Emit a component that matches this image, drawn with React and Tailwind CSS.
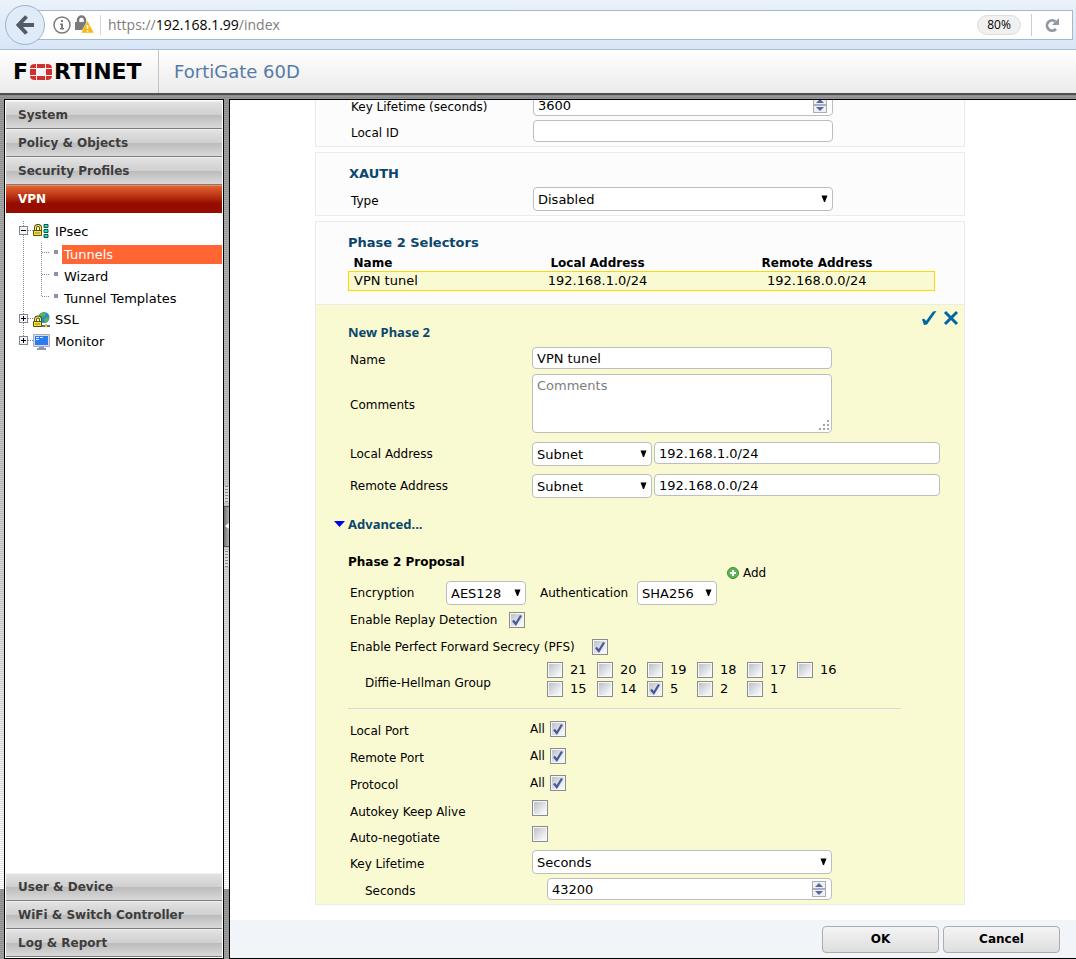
import { useId, useState } from 'react';
import clsx from 'clsx';

const TOP_MENU = ['System', 'Policy & Objects', 'Security Profiles'];
const BOTTOM_MENU = ['User & Device', 'WiFi & Switch Controller', 'Log & Report'];
const DH_GROUPS = [
  ['21', '20', '19', '18', '17', '16'],
  ['15', '14', '5', '2', '1'],
];

function BrowserBar() {
  return (
    <div className="flex h-[50px] shrink-0 items-center border-b border-[#a9bdd3] bg-linear-to-b from-[#eaf2fb] to-[#d7e6f7] pr-[3px] pl-[5px] font-['Open_Sans',sans-serif]">
      <button
        type="button"
        aria-label="Back"
        className="z-10 flex h-10 w-10 shrink-0 items-center justify-center rounded-full border border-[#9fb3cb] bg-[#dfebf8]"
      >
        <svg width="20" height="20" viewBox="0 0 20 20" fill="none" stroke="#545b65" strokeWidth="4">
          <path d="M11.5 1.5 3.5 10l8 8.500M4 10h15" />
        </svg>
      </button>
      <div className="-ml-2 flex h-[30px] min-w-0 flex-1 items-center border border-[#a3b7cd] bg-white pr-3 pl-[15px]">
        <svg className="shrink-0" width="18" height="18" viewBox="0 0 18 18">
          <circle cx="9" cy="9" r="8" fill="#fff" stroke="#7b7b7b" strokeWidth="1.500" />
          <path d="M8 4h2v2H8zM7 7.500h3V12h1v1.500H7V12h1V9H7z" fill="#7b7b7b" />
        </svg>
        <svg className="ml-1 shrink-0" width="19" height="19" viewBox="0 0 19 19">
          <path d="M3 8V5a3.500 3.500 0 0 1 7 0v3" fill="none" stroke="#7b7b7b" strokeWidth="2.500" />
          <path d="M0 7h12v8H0z" fill="#7b7b7b" />
          <path d="M12.500 5.500 19 18H6z" fill="#fcb80f" stroke="#fff" strokeWidth=".5" strokeLinejoin="round" />
          <path d="M11.700 10h1.600v4h-1.600zM11.700 15.300h1.600v1.500h-1.600z" fill="#fff" />
        </svg>
        <div className="ml-[6px] h-5 w-px shrink-0 bg-[#d4d4d4]" />
        <div className="ml-[7px] flex-1 truncate text-[14px] leading-[22px] text-[#7d7d7d]">
          https://<span className="text-black">192.168.1.99</span>/index
        </div>
        <button
          type="button"
          className="h-5 w-11 rounded-full border border-[#dedede] bg-[#f0f0f0] text-[12px] leading-4 text-black"
        >
          80%
        </button>
        <div className="ml-[10px] h-[22px] w-px shrink-0 bg-[#c9ced4]" />
        <button type="button" aria-label="Reload" className="ml-3">
          <svg width="16" height="16" viewBox="0 0 16 16">
            <path d="M12 12A5.200 5.200 0 1 1 11.500 4.500" fill="none" stroke="#8f99a3" strokeWidth="2.800" />
            <path d="M15 1v7H8z" fill="#8f99a3" />
          </svg>
        </button>
      </div>
    </div>
  );
}

function Logo() {
  return (
    <div className="flex items-center text-[22px] leading-6 font-bold text-black" aria-label="Fortinet">
      <span>F</span>
      <svg className="mx-[2px]" width="22" height="16" viewBox="0 0 22 16" fill="#d0302f">
        <path d="M6 0v4H0Q0 0 5 0zM7 0h8v4H7zM16 0h1q5 0 5 4h-6zM0 5h6v6H0zM16 5h6v6h-6zM0 12h6v4H5q-5 0-5-4zM7 12h8v4H7zM16 12h6q0 4-5 4h-1z" />
      </svg>
      <span>RTINET</span>
    </div>
  );
}

function MenuButton({ label, active = false }) {
  return (
    <button
      type="button"
      className={clsx(
        'block h-7 w-full border-t border-b pl-3 text-left text-[12px] leading-[26px] font-bold',
        active
          ? 'border-t-[#f58a60] border-b-[#960d00] bg-linear-to-b from-[#e2622f] via-[#b32c10] via-45% to-[#960d00] to-65% text-white'
          : 'border-t-[#f0f0f0] border-b-[#7b7b7b] bg-[linear-gradient(#e2e2e2,#d0d0d0_48%,#bcbcbc_52%,#d9d9d9)] text-[#3d3d3d]'
      )}
    >
      {label}
    </button>
  );
}

// Dotted connector with the +/- box for a top level tree node.
function NodeLines({ open = false, first = false, last = false }) {
  return (
    <svg className="shrink-0" width="27" height="22" viewBox="0 0 27 22" shapeRendering="crispEdges">
      <path
        d={`M17.500 ${first ? -2 : 0}V${last ? 10 : 22}M22 9.500h5`}
        stroke="#8a8a8a"
        strokeDasharray="1 1"
        overflow="visible"
      />
      <rect x="13.500" y="5.500" width="8" height="8" fill="#f4f4f4" stroke="#7f8796" />
      <path d={open ? 'M15 9.500h5' : 'M15 9.500h5M17.500 7v5'} stroke="#000" />
    </svg>
  );
}

function LeafLines({ last = false }) {
  return (
    <svg className="shrink-0" width="56" height="22" viewBox="0 0 56 22" shapeRendering="crispEdges">
      <path
        d={last ? 'M17.500 0V22M35.500 0V10M36 9.500h8' : 'M17.500 0V22M35.500 0V22M36 9.500h8'}
        stroke="#8a8a8a"
        strokeDasharray="1 1"
      />
      <rect x="48" y="7" width="4" height="4" fill="#8892ab" />
    </svg>
  );
}

function IpsecIcon() {
  return (
    <svg width="16" height="16" viewBox="0 0 16 16">
      <path d="M2.500 7V4q0-2.500 2.500-2.500T7.500 4v3" fill="none" stroke="#4a4600" strokeWidth="3" />
      <path d="M2.500 7V4q0-2.500 2.500-2.500T7.500 4v3" fill="none" stroke="#f7ee7a" strokeWidth="1.200" />
      <path d="M.5 6.500h8v5h-8z" fill="#f3e43c" stroke="#55500a" />
      <path d="M2 9h5" stroke="#8f8410" />
      <path d="M11 .5h4v3h-4zM11 5.500h4v3h-4zM11 10.500h4v3h-4z" fill="#22e0b4" stroke="#07594a" />
    </svg>
  );
}

function SslIcon() {
  return (
    <svg width="17" height="16" viewBox="0 0 17 16">
      <circle cx="11" cy="5.500" r="5.500" fill="#2f86d8" />
      <path d="M7 2q3-2.500 6-1l-1 3-3 1-1 2-2-2zM12 6l4-1q0 4-3 6l-2-3z" fill="#57b74b" />
      <path d="M8 14h9" stroke="#68707c" strokeWidth="2" />
      <path d="M12 12h2v3h-2z" fill="#f1c232" />
      <path d="M2.500 10V7.500Q2.500 5 5 5t2.500 2.500V10" fill="none" stroke="#4a4600" strokeWidth="3" />
      <path d="M2.500 10V7.500Q2.500 5 5 5t2.500 2.500V10" fill="none" stroke="#f7ee7a" strokeWidth="1.200" />
      <path d="M.5 9.500h8v5h-8z" fill="#f3e43c" stroke="#55500a" />
      <path d="M2 12h5" stroke="#8f8410" />
    </svg>
  );
}

function MonitorIcon() {
  return (
    <svg width="17" height="16" viewBox="0 0 17 16">
      <path d="M.5.5h16v12H.5z" fill="#d9dde6" stroke="#a4abbb" />
      <path d="M2 2h13v9H2z" fill="#2d7bf0" />
      <path d="M3 3.500h3M7 3.500h3M3 5.500h3" stroke="#d4e6ff" />
      <path d="M6 13h5v1h2v2H4v-2h2z" fill="#8f98ab" />
    </svg>
  );
}

function TreeNode({ icon, label, ...lines }) {
  return (
    <a href="#" className="flex h-[22px] items-center">
      <NodeLines {...lines} />
      <span className="flex w-[22px] shrink-0">{icon}</span>
      <span className="leading-5">{label}</span>
    </a>
  );
}

function TreeLeaf({ label, active, last }) {
  return (
    <a href="#" className="flex h-[22px] items-center">
      <LeafLines last={last} />
      <span className={clsx('h-[19px] flex-1 px-[2px] leading-5', active && 'bg-[#ff6633] text-white')}>
        {label}
      </span>
    </a>
  );
}

function Sidebar() {
  return (
    <nav className="flex w-[220px] shrink-0 flex-col border border-black bg-white p-px text-[12px]">
      {TOP_MENU.map((item) => (
        <MenuButton key={item} label={item} />
      ))}
      <MenuButton label="VPN" active />
      <div className="flex-1 pt-2 text-[13px]">
        <TreeNode icon={<IpsecIcon />} label="IPsec" open first />
        <TreeLeaf label="Tunnels" active />
        <TreeLeaf label="Wizard" />
        <TreeLeaf label="Tunnel Templates" last />
        <TreeNode icon={<SslIcon />} label="SSL" />
        <TreeNode icon={<MonitorIcon />} label="Monitor" last />
      </div>
      {BOTTOM_MENU.map((item) => (
        <MenuButton key={item} label={item} />
      ))}
    </nav>
  );
}

function Grip() {
  return (
    <div className="flex h-4 w-[5px] justify-center bg-[#dcdcdc]">
      <div className="w-[3px] bg-[repeating-linear-gradient(#8a8a8a_0_1px,#dcdcdc_1px_3px)]" />
    </div>
  );
}

function Splitter() {
  return (
    <div className="flex w-[5px] shrink-0 flex-col items-center justify-center gap-1 pb-[6px]">
      <Grip />
      <button
        type="button"
        aria-label="Collapse menu"
        className="flex h-[41px] w-[5px] items-center justify-center border-y border-[#555] bg-linear-to-r from-[#6e6e6e] to-[#b4b4b4]"
      >
        <svg width="4" height="6" viewBox="0 0 4 6" fill="#fff">
          <path d="M4 0v6L0 3z" />
        </svg>
      </button>
      <Grip />
    </div>
  );
}

const FIELD = 'block w-full rounded-[4px] border border-[#bdbdbd] bg-white px-1 text-[13px] text-black outline-none';

function TextInput({ className, ...props }) {
  return <input type="text" className={clsx(FIELD, 'h-[22px] leading-5', className)} {...props} />;
}

function Select({ options, className, ...props }) {
  return (
    <div className={clsx('relative', className)}>
      <select className={clsx(FIELD, 'h-6 appearance-none pt-px leading-5')} {...props}>
        {options.map((o) => (
          <option key={o}>{o}</option>
        ))}
      </select>
      <svg className="pointer-events-none absolute top-2 right-[5px]" width="7" height="7" viewBox="0 0 7 7">
        <path d="M.5.5h6L4 7H3z" />
      </svg>
    </div>
  );
}

function NumberInput({ id, initial, className }) {
  const [value, setValue] = useState(initial);
  const arrow = 'flex h-[6px] w-3 items-center justify-center bg-[#eef0f3]';
  return (
    <div className={clsx('relative', className)}>
      <input
        id={id}
        type="number"
        value={value}
        onChange={(e) => setValue(Number(e.target.value))}
        className={clsx(FIELD, 'h-[22px] [appearance:textfield] leading-5 [&::-webkit-inner-spin-button]:appearance-none')}
      />
      <div className="absolute top-[3px] right-[6px] flex h-4 w-[14px] flex-col justify-between border border-[#adadad] bg-[#adadad]">
        <button type="button" aria-label="Increase" onClick={() => setValue(value + 1)} className={arrow}>
          <svg width="8" height="4" viewBox="0 0 8 4" fill="#4f68b0">
            <path d="M4 0l4 4H0z" />
          </svg>
        </button>
        <button type="button" aria-label="Decrease" onClick={() => setValue(value - 1)} className={arrow}>
          <svg width="8" height="4" viewBox="0 0 8 4" fill="#4f68b0">
            <path d="M0 0h8L4 4z" />
          </svg>
        </button>
      </div>
    </div>
  );
}

function Checkbox({ id, checked = false }) {
  return (
    <span className="relative block h-4 w-4 shrink-0">
      <input
        id={id}
        type="checkbox"
        defaultChecked={checked}
        className="peer block h-4 w-4 appearance-none border border-[#8a8c8e] bg-[#f6f6f6] bg-[linear-gradient(135deg,#bcc2c9,#f4f5f6_85%)] bg-[length:12px_12px] bg-center bg-no-repeat"
      />
      <svg
        className="pointer-events-none absolute top-[2px] left-[2px] hidden peer-checked:block"
        width="12"
        height="12"
        viewBox="0 0 12 12"
      >
        <path d="M2 6.500 4.800 10 10 1.500" fill="none" stroke="#465a9b" strokeWidth="2.300" />
      </svg>
    </span>
  );
}

const LABEL = 'w-[182px] shrink-0 pt-[3px] leading-4';

function Row({ label, htmlFor, className, labelClassName = LABEL, children }) {
  return (
    <div className={clsx('flex items-center', className)}>
      <label htmlFor={htmlFor} className={labelClassName}>
        {label}
      </label>
      {children}
    </div>
  );
}

function AllRow({ label, className }) {
  const id = useId();
  return (
    <div className={clsx('flex h-4 items-center', className)}>
      <span className="w-[180px] shrink-0 pt-[3px] leading-4">{label}</span>
      <label htmlFor={id} className="w-5 leading-4" aria-label={`${label} all`}>
        All
      </label>
      <Checkbox id={id} checked />
    </div>
  );
}

function SelectorsTable() {
  return (
    <table className="w-[587px] table-fixed border-collapse text-[12px] leading-4">
      <thead>
        <tr>
          <th className="w-[139px] pl-[5px] text-left">Name</th>
          <th className="w-[220px]">Local Address</th>
          <th className="pr-2">Remote Address</th>
        </tr>
      </thead>
      <tbody>
        <tr className="h-[19px] border border-[#ffd800] bg-[#fafad2] text-[13px]">
          <td className="pl-[5px]">VPN tunel</td>
          <td className="text-center">192.168.1.0/24</td>
          <td className="pr-2 text-center">192.168.0.0/24</td>
        </tr>
      </tbody>
    </table>
  );
}

function AddressRow({ label, value, className }) {
  const id = useId();
  return (
    <Row label={label} htmlFor={id} className={clsx('h-6', className)} labelClassName="w-[182px] shrink-0 leading-4">
      <Select aria-label={`${label} type`} className="w-[120px]" options={['Subnet', 'Address Range', 'IP Address']} />
      <TextInput id={id} defaultValue={value} className="ml-[2px] max-w-[286px] self-start" />
    </Row>
  );
}

function NewPhase2() {
  return (
    <section className="border-x border-b border-[#ebebeb] bg-[#fafad2] pb-1 pl-8">
      <div className="flex h-[42px] justify-between pr-[5px]">
        <h3 className="pt-[19px] font-['Noto_Sans',sans-serif] text-[13px] leading-4 font-bold text-[#0b466c]">
          New Phase 2
        </h3>
        <div className="flex items-start gap-[6px] pt-[5px]">
          <button type="button" aria-label="Apply">
            <svg width="16" height="16" viewBox="0 0 16 16" fill="#0067a3">
              <path d="M1 9.500q1.500-1.500 3 0l1 1.500L12 1.500 15.500 1 6 14.500l-3 .5z" />
            </svg>
          </button>
          <button type="button" aria-label="Discard">
            <svg width="16" height="16" viewBox="0 0 16 16" fill="none" stroke="#0067a3" strokeWidth="3">
              <path d="M2 2l12 12M14 2 2 14" />
            </svg>
          </button>
        </div>
      </div>

      <div className="pl-[2px]">
        <Row label="Name" htmlFor="p2-name">
          <TextInput id="p2-name" defaultValue="VPN tunel" className="max-w-[300px]" />
        </Row>
        <Row label="Comments" htmlFor="p2-comments" className="mt-[5px]">
          <div className="relative w-[300px]">
            <textarea
              id="p2-comments"
              placeholder="Comments"
              className={clsx(FIELD, 'h-[59px] resize-none py-[3px] leading-4 placeholder:text-[#7d7d7d]')}
            />
            <svg
              className="pointer-events-none absolute right-[3px] bottom-[2px]"
              width="11"
              height="11"
              viewBox="0 0 11 11"
              fill="#a6a6a6"
            >
              <path d="M9 0h2v2H9zM5 4h2v2H5zM9 4h2v2H9zM1 8h2v2H1zM5 8h2v2H5zM9 8h2v2H9z" />
            </svg>
          </div>
        </Row>
        <AddressRow label="Local Address" value="192.168.1.0/24" className="mt-[9px]" />
        <AddressRow label="Remote Address" value="192.168.0.0/24" className="mt-2" />
      </div>

      <button
        type="button"
        aria-expanded="true"
        className="mt-[18px] -ml-[14px] flex items-center gap-[3px] font-['Noto_Sans',sans-serif] text-[13px] leading-4 font-bold text-[#0b466c]"
      >
        <svg width="11" height="6" viewBox="0 0 11 6" fill="#0000f0">
          <path d="M0 0h11L5.500 6z" />
        </svg>
        Advanced...
      </button>

      <div className="flex h-[49px] items-end">
        <h4 className="w-[379px] pb-[11px] leading-4 font-bold">Phase 2 Proposal</h4>
        <button type="button" className="flex h-4 items-center gap-1 leading-4">
          <svg width="12" height="12" viewBox="0 0 12 12">
            <circle cx="6" cy="6" r="5.500" fill="#5ab552" stroke="#3c8f3c" />
            <path d="M6 3v6M3 6h6" stroke="#fff" strokeWidth="2" />
          </svg>
          Add
        </button>
      </div>

      <div className="pl-[2px]">
        <div className="flex h-6 items-center">
          <label htmlFor="p2-enc" className="w-24">
            Encryption
          </label>
          <Select id="p2-enc" className="w-20" options={['AES128', 'AES192', 'AES256']} />
          <label htmlFor="p2-auth" className="ml-[14px] w-[97px]">
            Authentication
          </label>
          <Select id="p2-auth" className="w-20" options={['SHA256', 'SHA1', 'MD5']} />
        </div>
        <div className="mt-[7px] flex h-4 items-center">
          <label htmlFor="p2-replay" className="w-[159px]">
            Enable Replay Detection
          </label>
          <Checkbox id="p2-replay" checked />
        </div>
        <div className="mt-[11px] flex h-4 items-center">
          <label htmlFor="p2-pfs" className="w-[242px]">
            Enable Perfect Forward Secrecy (PFS)
          </label>
          <Checkbox id="p2-pfs" checked />
        </div>
        <div className="mt-[7px] flex items-center pl-[15px]" role="group" aria-labelledby="p2-dh">
          <span id="p2-dh" className="w-[182px] pt-[6px]">
            Diffie-Hellman Group
          </span>
          <div className="flex flex-col gap-[3px] text-[13px]">
            {DH_GROUPS.map((row) => (
              <div key={row[0]} className="flex h-4">
                {row.map((g) => (
                  <label key={g} className="flex w-[50px] items-center gap-[7px] leading-4">
                    <Checkbox checked={g === '5'} />
                    {g}
                  </label>
                ))}
              </div>
            ))}
          </div>
        </div>
      </div>

      <hr className="mt-[11px] w-[553px] border-[#d8d8dc]" />

      <div className="pt-3 pl-[2px]">
        <AllRow label="Local Port" />
        <AllRow label="Remote Port" className="mt-[11px]" />
        <AllRow label="Protocol" className="mt-[11px]" />
        <div className="mt-[9px] flex h-5">
          <label htmlFor="p2-keepalive" className="w-[182px] self-end leading-4">
            Autokey Keep Alive
          </label>
          <Checkbox id="p2-keepalive" />
        </div>
        <div className="mt-[6px] flex h-5">
          <label htmlFor="p2-autoneg" className="w-[182px] self-end leading-4">
            Auto-negotiate
          </label>
          <Checkbox id="p2-autoneg" />
        </div>
        <Row label="Key Lifetime" htmlFor="p2-life" className="mt-1">
          <Select id="p2-life" className="w-[300px]" options={['Seconds', 'Kilobytes', 'Both']} />
        </Row>
        <Row label="Seconds" htmlFor="p2-secs" className="mt-1 pl-[15px]">
          <NumberInput id="p2-secs" initial={43200} className="w-[285px]" />
        </Row>
      </div>
    </section>
  );
}

function TunnelForm() {
  const card = 'border border-[#ebebeb] bg-[#fcfcfc]';
  const heading = 'text-[13px] leading-4 font-bold text-[#0b466c]';
  return (
    <form className="mx-auto -mt-[11px] w-full max-w-[650px]">
      <section className={clsx(card, 'pt-1 pb-1 pl-[35px]')}>
        <Row label="Key Lifetime (seconds)" htmlFor="p1-life">
          <NumberInput id="p1-life" initial={3600} className="w-[300px]" />
        </Row>
        <Row label="Local ID" htmlFor="p1-id" className="mt-1">
          <TextInput id="p1-id" className="max-w-[300px]" />
        </Row>
      </section>

      <section className={clsx(card, 'mt-[5px] pt-[13px] pb-1 pl-[33px]')}>
        <h3 className={heading}>XAUTH</h3>
        <Row label="Type" htmlFor="xauth" className="mt-[5px] pl-[2px]">
          <Select id="xauth" className="w-[300px]" options={['Disabled', 'PAP Server', 'CHAP Server']} />
        </Row>
      </section>

      <section className={clsx(card, 'mt-[5px] pt-[13px] pb-[13px] pl-8')}>
        <h3 className={clsx(heading, 'mb-1')}>Phase 2 Selectors</h3>
        <SelectorsTable />
      </section>

      <NewPhase2 />
    </form>
  );
}

export default function App() {
  const action =
    'h-[27px] w-[117px] rounded-[4px] border border-[#adadad] bg-linear-to-b from-[#f4f4f4] to-[#dedede] font-bold text-black';
  return (
    <div className="flex h-screen flex-col overflow-hidden bg-white font-['DejaVu_Sans',Verdana,sans-serif] text-[12px] text-black">
      <BrowserBar />
      <header className="flex h-[45px] shrink-0 items-center border-b-2 border-[#505050] bg-linear-to-b from-white to-[#ebebeb]">
        <div className="flex h-full w-[159px] items-center border-r border-[#c4c4c4] pl-[13px]">
          <Logo />
        </div>
        <h1 className="pl-[15px] text-[18px] leading-6 text-[#567aa6]">FortiGate 60D</h1>
      </header>

      <div className="flex min-h-0 flex-1 bg-[repeating-linear-gradient(rgba(0,0,0,.1)_0_1px,transparent_1px_2px),linear-gradient(#9a9a9a,#fff)] bg-[length:100%_794px] pt-1 pl-1">
        <Sidebar />
        <Splitter />
        <main className="flex min-w-0 flex-1 flex-col border-y border-l border-black bg-white">
          <div className="min-h-0 flex-1 overflow-hidden pr-[26px]">
            <TunnelForm />
          </div>
          <footer className="flex h-[38px] shrink-0 items-center justify-end gap-1 bg-[#f1f4f9] pr-4">
            <button type="button" className={action}>
              OK
            </button>
            <button type="button" className={action}>
              Cancel
            </button>
          </footer>
        </main>
      </div>
    </div>
  );
}
